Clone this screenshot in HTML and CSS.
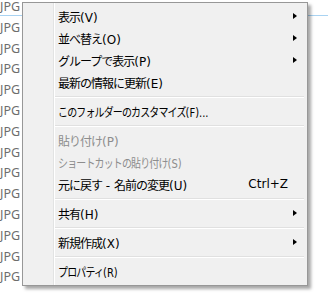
FILE: index.html
```html
<!DOCTYPE html>
<html lang="ja">
<head>
    <meta charset="UTF-8">
    <title>コンテキストメニュー</title>
    <link rel="stylesheet" href="styles.css">
</head>
<body>
    <div class="desktop">
        <div class="file-list">
            <div class="file-row focus">JPG</div>
            <div class="file-row">JPG</div>
            <div class="file-row">JPG</div>
            <div class="file-row">JPG</div>
            <div class="file-row">JPG</div>
            <div class="file-row">JPG</div>
            <div class="file-row">JPG</div>
            <div class="file-row">JPG</div>
            <div class="file-row">JPG</div>
            <div class="file-row">JPG</div>
            <div class="file-row">JPG</div>
            <div class="file-row">JPG</div>
            <div class="file-row">JPG</div>
            <div class="file-row">JPG</div>
        </div>

        <div class="context-menu">
            <div class="menu-item"><span class="label">表示<span class="acc">(V)</span></span><span class="arrow"></span></div>
            <div class="menu-item"><span class="label">並べ替え<span class="acc">(O)</span></span><span class="arrow"></span></div>
            <div class="menu-item"><span class="label">グループで表示<span class="acc">(P)</span></span><span class="arrow"></span></div>
            <div class="menu-item"><span class="label">最新の情報に更新<span class="acc">(E)</span></span></div>
            <div class="separator"></div>
            <div class="menu-item"><span class="label tight">このフォルダーのカスタマイズ<span class="acc">(F)...</span></span></div>
            <div class="separator"></div>
            <div class="menu-item disabled"><span class="label">貼り付け<span class="acc">(P)</span></span></div>
            <div class="menu-item disabled"><span class="label tight">ショートカットの貼り付け<span class="acc">(S)</span></span></div>
            <div class="menu-item"><span class="label">元に戻す<span class="acc"> - </span>名前の変更<span class="acc">(U)</span></span><span class="key">Ctrl+Z</span></div>
            <div class="separator"></div>
            <div class="menu-item"><span class="label">共有<span class="acc">(H)</span></span><span class="arrow"></span></div>
            <div class="separator"></div>
            <div class="menu-item"><span class="label">新規作成<span class="acc">(X)</span></span><span class="arrow"></span></div>
            <div class="separator"></div>
            <div class="menu-item"><span class="label tight">プロパティ<span class="acc">(R)</span></span></div>
        </div>
    </div>
</body>
</html>
```

FILE: styles.css
```css
* {
    margin: 0;
    padding: 0;
    box-sizing: border-box;
}

body {
    background-color: #ffffff;
    font-family: 'DejaVu Sans', 'Noto Sans CJK JP', sans-serif;
    overflow: hidden;
}

.desktop {
    position: relative;
    width: 328px;
    height: 293px;
    overflow: hidden;
}

.file-row {
    height: 20.8px;
    line-height: 14px;
    font-family: 'Noto Sans', sans-serif;
    font-size: 12.5px;
    color: #6d6d6d;
}

.file-row.focus {
    background: linear-gradient(to bottom,
        transparent 15px, #a9d3f2 15px, #a9d3f2 16px, transparent 16px);
}

.context-menu {
    position: absolute;
    top: 2px;
    left: 22px;
    width: 286px;
    padding: 2px 2px 3px 2px;
    background-color: #f0f0f0;
    background-image: linear-gradient(to right,
        transparent 30px, #e2e3e3 30px, #e2e3e3 31px,
        #ffffff 31px, #ffffff 32px, transparent 32px);
    border: 1px solid #979797;
    box-shadow: 3px 3px 3px rgba(0, 0, 0, 0.35);
}

.menu-item {
    display: flex;
    align-items: center;
    height: 22px;
    padding: 0 8px 0 33px;
    font-size: 12px;
    color: #000000;
    white-space: nowrap;
}

.menu-item .label {
    flex: 1;
    font-family: 'Noto Sans CJK JP', sans-serif;
    letter-spacing: -1px;
}

/* kana-heavy labels: Meiryo UI kana are condensed */
.menu-item .label.tight {
    transform: scaleX(0.83);
    transform-origin: left center;
}

.menu-item .acc,
.menu-item .key {
    font-family: 'DejaVu Sans', sans-serif;
    letter-spacing: 0;
}

.menu-item.disabled {
    color: #8d8d8d;
}

.menu-item .key {
    margin-right: 9px;
}

.menu-item .arrow {
    width: 0;
    height: 0;
    border-left: 4px solid #000000;
    border-top: 3.5px solid transparent;
    border-bottom: 3.5px solid transparent;
}

.separator {
    height: 7px;
    margin: 0 1px 0 30px;
    background: linear-gradient(to bottom,
        transparent 3px, #e0e0e0 3px, #e0e0e0 4px,
        #ffffff 4px, #ffffff 5px, transparent 5px);
}
```
